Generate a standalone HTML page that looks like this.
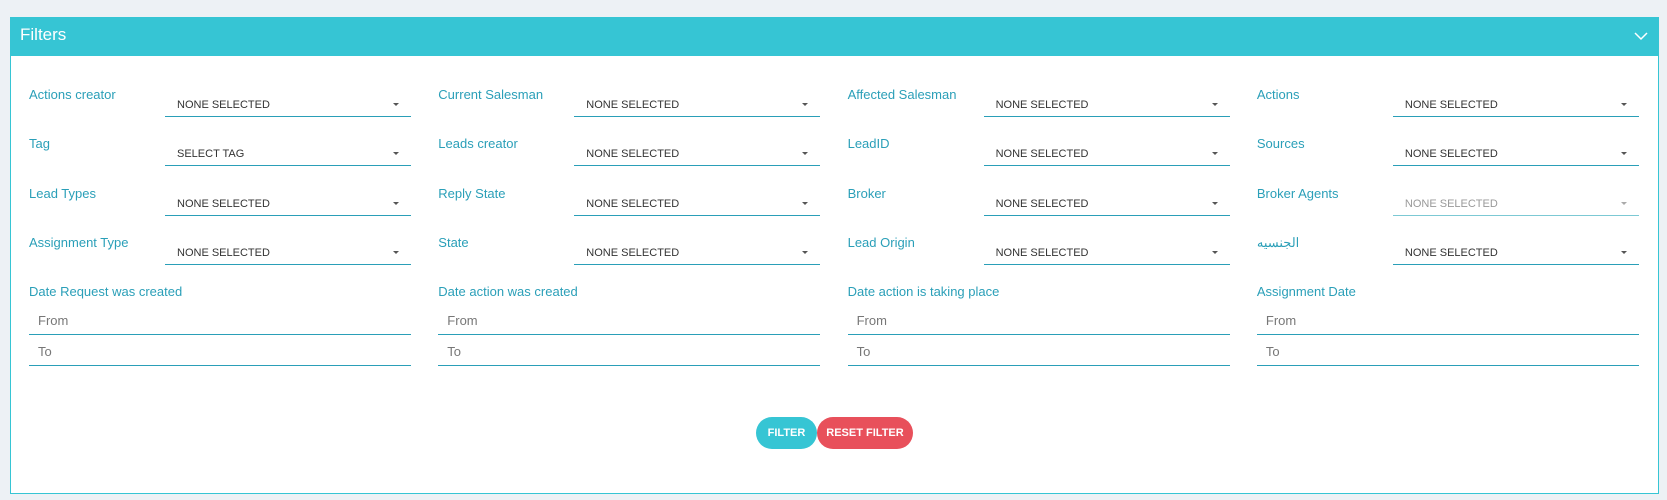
<!DOCTYPE html>
<html><head><style>
body{margin:0;width:1667px;height:500px;background:#edf1f5;font-family:"Liberation Sans","Noto Sans CJK SC",sans-serif;position:relative;overflow:hidden}
.panel{position:absolute;left:10px;top:17px;width:1647px;height:475px;background:#fff;border:1px solid #36c5d4;}
.hdr{position:absolute;left:0;top:0;right:0;height:38px;background:#36c5d4;color:#fff;font-size:17px;line-height:34px;padding-left:9px}
.chev{position:absolute;right:10px;top:13px}
.lbl{position:absolute;font-size:13px;color:#2a9fb8}
.sel{position:absolute;width:246px;height:27px;border-bottom:1.5px solid #2a9fb8;font-size:11px;color:#333;}
.sel span{position:absolute;left:12px;top:10px}
.sel i{position:absolute;right:12px;top:14px;border-left:3px solid transparent;border-right:3px solid transparent;border-top:3px solid #555}
.sel.dis{color:#999;border-color:#7cc9d4}.sel.dis i{border-top-color:#aaa}
.inp{position:absolute;width:382px;height:25px;border-bottom:1.5px solid #2a9fb8;font-size:13px;color:#777}
.inp span{position:absolute;left:9px;top:4px}
.btn{position:absolute;top:417px;height:32px;border-radius:16px;color:#fff;font-size:11px;font-weight:bold;text-align:center;line-height:33px}
</style></head><body>
<div class="panel"><div class="hdr">Filters<svg class="chev" width="14" height="10" viewBox="0 0 14 10"><path d="M1 2l6 6 6-6" fill="none" stroke="#fff" stroke-width="1.5"/></svg></div></div>
<div id="g"></div>
<div class="btn" style="left:756px;width:61px;background:#36c5d4">FILTER</div>
<div class="btn" style="left:817px;width:96px;background:#e8505b">RESET FILTER</div>
<script>
var rows=[["Actions creator","Current Salesman","Affected Salesman","Actions"],["Tag","Leads creator","LeadID","Sources"],["Lead Types","Reply State","Broker","Broker Agents"],["Assignment Type","State","Lead Origin","الجنسيه"]];
var h="";
for(var r=0;r<4;r++)for(var c=0;c<4;c++){var x=29+c*409.3,y=87+r*49.3;
h+='<div class="lbl" style="left:'+x+'px;top:'+y+'px">'+rows[r][c]+'</div>';
var d=(r==2&&c==3);
h+='<div class="sel'+(d?' dis':'')+'" style="left:'+(x+136)+'px;top:'+(y+2)+'px"><span>'+(r==1&&c==0?'SELECT TAG':'NONE SELECTED')+'</span><i></i></div>';}
var dl=["Date Request was created","Date action was created","Date action is taking place","Assignment Date"];
for(var c=0;c<4;c++){var x=29+c*409.3;
h+='<div class="lbl" style="left:'+x+'px;top:284px">'+dl[c]+'</div>';
h+='<div class="inp" style="left:'+x+'px;top:309px"><span>From</span></div>';
h+='<div class="inp" style="left:'+x+'px;top:340px"><span>To</span></div>';}
document.getElementById("g").innerHTML=h;
</script>
</body></html>
